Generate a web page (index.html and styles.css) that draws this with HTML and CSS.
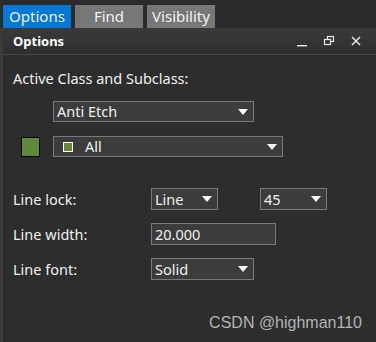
FILE: index.html
```html
<!DOCTYPE html>
<html lang="en">
<head>
    <meta charset="UTF-8">
    <title>Options</title>
    <link rel="stylesheet" href="styles.css">
</head>
<body>

    <div class="tabs">
        <div class="tab active">Options</div>
        <div class="tab">Find</div>
        <div class="tab">Visibility</div>
    </div>

    <div class="panel">
        <div class="header">
            <span class="title">Options</span>
            <div class="win-buttons">
                <svg width="12" height="12" viewBox="0 0 12 12"><rect x="1" y="10" width="10" height="1.4" fill="#e6e6e6"/></svg>
                <svg width="12" height="12" viewBox="0 0 12 12"><rect x="4.5" y="1.5" width="6" height="5" fill="none" stroke="#e6e6e6" stroke-width="1.2"/><rect x="1.5" y="4.5" width="6" height="5" fill="#333" stroke="#e6e6e6" stroke-width="1.2"/></svg>
                <svg width="12" height="12" viewBox="0 0 12 12"><path d="M2 2 L10 10 M10 2 L2 10" stroke="#e6e6e6" stroke-width="1.5"/></svg>
            </div>
        </div>

        <div class="content">
            <div class="label">Active Class and Subclass:</div>

            <div class="select-row">
                <div class="select class-select">
                    <span>Anti Etch</span>
                    <svg class="arrow" width="10" height="6" viewBox="0 0 10 6"><path d="M0 0 H10 L5 6 Z" fill="#fff"/></svg>
                </div>
            </div>

            <div class="select-row sub">
                <div class="swatch"></div>
                <div class="select subclass-select">
                    <span class="mini-swatch"></span>
                    <span>All</span>
                    <svg class="arrow" width="10" height="6" viewBox="0 0 10 6"><path d="M0 0 H10 L5 6 Z" fill="#fff"/></svg>
                </div>
            </div>

            <div class="form">
                <div class="label">Line lock:</div>
                <div class="controls">
                    <div class="select small">
                        <span>Line</span>
                        <svg class="arrow" width="10" height="6" viewBox="0 0 10 6"><path d="M0 0 H10 L5 6 Z" fill="#fff"/></svg>
                    </div>
                    <div class="select small">
                        <span>45</span>
                        <svg class="arrow" width="10" height="6" viewBox="0 0 10 6"><path d="M0 0 H10 L5 6 Z" fill="#fff"/></svg>
                    </div>
                </div>

                <div class="label">Line width:</div>
                <div class="controls">
                    <div class="input">20.000</div>
                </div>

                <div class="label">Line font:</div>
                <div class="controls">
                    <div class="select font-select">
                        <span>Solid</span>
                        <svg class="arrow" width="10" height="6" viewBox="0 0 10 6"><path d="M0 0 H10 L5 6 Z" fill="#fff"/></svg>
                    </div>
                </div>
            </div>
        </div>

        <div class="watermark">CSDN @highman110</div>
    </div>

</body>
</html>
```

FILE: styles.css
```css
body {
    margin: 0;
    width: 376px;
    height: 342px;
    background-color: #2d2d2d;
    font-family: 'Noto Sans', 'Open Sans', sans-serif;
    color: #f0f0f0;
    overflow: hidden;
}

.tabs {
    display: flex;
    gap: 4px;
    height: 23px;
    padding: 5px 0 0 3px;
    background-color: #2b2b2b;
}

.tab {
    width: 68px;
    background-color: #777;
    color: #f2f2f2;
    font-size: 15px;
    line-height: 23px;
    text-align: center;
}

.tab.active {
    background-color: #0078d7;
}

.panel {
    position: relative;
    height: 314px;
    border-left: 3px solid #3b3b3b;
}

.header {
    display: flex;
    align-items: center;
    justify-content: space-between;
    height: 26px;
    padding: 0 14px 0 10px;
    background: linear-gradient(#3a3a3a, #2e2e2e);
    border-bottom: 1px solid #474747;
}

.title {
    font-size: 13px;
    font-weight: bold;
    color: #fff;
}

.win-buttons {
    display: flex;
    gap: 15px;
}

.content {
    padding: 12px 0 0 10px;
    font-size: 14.5px;
}

.label {
    height: 22px;
    line-height: 22px;
}

.select-row {
    display: flex;
    align-items: center;
    margin-top: 12px;
    padding-left: 40px;
}

.select-row.sub {
    margin-top: 14px;
    padding-left: 8px;
    gap: 13px;
}

.select {
    display: flex;
    align-items: center;
    justify-content: space-between;
    box-sizing: border-box;
    height: 21px;
    padding: 0 5px 0 3px;
    background-color: #3c3c3c;
    border: 1px solid #7a7a7a;
    line-height: 19px;
}

.class-select {
    width: 201px;
}

.subclass-select {
    width: 230px;
    justify-content: flex-start;
}

.subclass-select .arrow {
    margin-left: auto;
}

.swatch {
    box-sizing: border-box;
    width: 19px;
    height: 20px;
    background-color: #5f8a3a;
    border: 1px solid #000;
}

.mini-swatch {
    box-sizing: border-box;
    width: 10px;
    height: 10px;
    margin: 0 12px 0 6px;
    background-color: #5f8a3a;
    border: 1px solid #fff;
}

.form {
    display: grid;
    grid-template-columns: 138px auto;
    row-gap: 13px;
    margin-top: 31px;
    align-items: center;
}

.controls {
    display: flex;
    gap: 42px;
}

.select.small {
    width: 67px;
    height: 22px;
}

.input {
    box-sizing: border-box;
    width: 125px;
    height: 22px;
    padding: 0 3px;
    background-color: #3c3c3c;
    border: 1px solid #7a7a7a;
    line-height: 20px;
}

.select.font-select {
    width: 103px;
    height: 22px;
}

.watermark {
    position: absolute;
    right: 14px;
    bottom: 10px;
    font-family: 'Liberation Sans', sans-serif;
    font-size: 16px;
    color: #b4b4b4;
}
```
